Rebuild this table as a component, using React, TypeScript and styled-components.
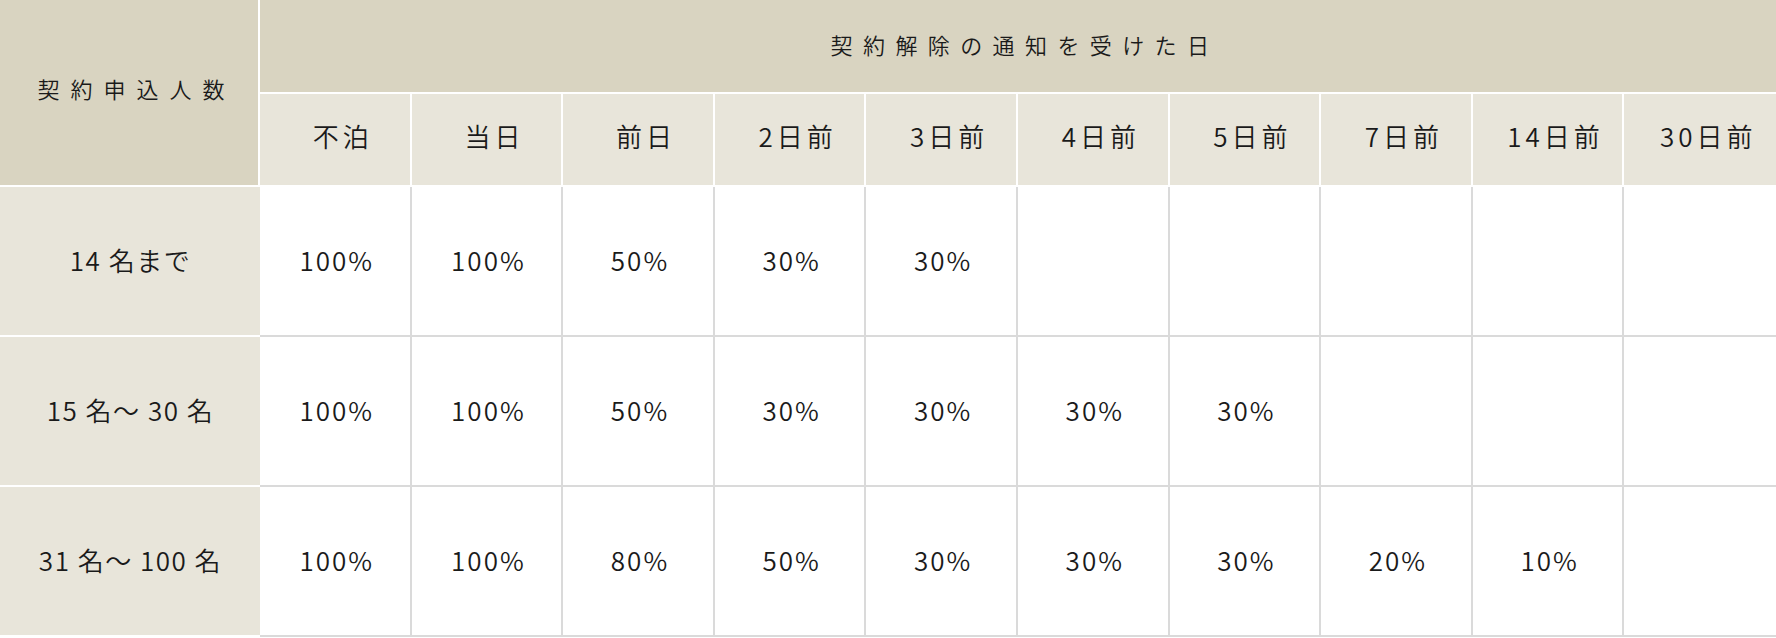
import styled, { createGlobalStyle } from 'styled-components'

const GlobalStyle = createGlobalStyle`
  html, body {
    margin: 0;
    padding: 0;
    background: #ffffff;
  }
  body {
    font-family: "Noto Sans CJK JP", "Noto Sans", sans-serif;
    color: #1a1a1a;
  }
`

type Row = {
  label: string
  values: string[]
}

const days = ['不泊', '当日', '前日', '2日前', '3日前', '4日前', '5日前', '7日前', '14日前', '30日前']

const rows: Row[] = [
  { label: '14 名まで', values: ['100%', '100%', '50%', '30%', '30%', '', '', '', '', ''] },
  { label: '15 名～ 30 名', values: ['100%', '100%', '50%', '30%', '30%', '30%', '30%', '', '', ''] },
  { label: '31 名～ 100 名', values: ['100%', '100%', '80%', '50%', '30%', '30%', '30%', '20%', '10%', ''] },
]

export default function App() {
  return (
    <>
      <GlobalStyle />
      <Table>
        <colgroup>
          <col style={{ width: 260 }} />
          {days.map((d) => (
            <col key={d} />
          ))}
        </colgroup>
        <thead>
          <tr>
            <Corner rowSpan={2}>契約申込人数</Corner>
            <Title colSpan={10}>契約解除の通知を受けた日</Title>
          </tr>
          <tr>
            {days.map((d, i) => (
              <DayHead key={d} $last={i === days.length - 1}>
                {d}
              </DayHead>
            ))}
          </tr>
        </thead>
        <tbody>
          {rows.map((r) => (
            <tr key={r.label}>
              <RowHead>{r.label}</RowHead>
              {r.values.map((v, i) => (
                <Cell key={i} $last={i === r.values.length - 1}>
                  {v}
                </Cell>
              ))}
            </tr>
          ))}
        </tbody>
      </Table>
    </>
  )
}

const Table = styled.table`
  width: 1776px;
  table-layout: fixed;
  border-collapse: separate;
  border-spacing: 0;
`

const Corner = styled.th`
  background-color: #d9d4c1;
  border-right: 2px solid #ffffff;
  border-bottom: 2px solid #ffffff;
  font-size: 22px;
  font-weight: 350;
  letter-spacing: 11px;
  padding: 0 0 9px 15px;
  text-align: center;
`

const Title = styled.th`
  height: 94px;
  box-sizing: border-box;
  background-color: #d9d4c1;
  border-bottom: 2px solid #ffffff;
  font-size: 22px;
  font-weight: 350;
  letter-spacing: 10.4px;
  padding: 0 0 5px 14px;
  text-align: center;
`

const DayHead = styled.th<{ $last?: boolean }>`
  height: 93px;
  box-sizing: border-box;
  background-color: #e8e5da;
  border-right: ${(p) => (p.$last ? 'none' : '2px solid #ffffff')};
  border-bottom: 2px solid #ffffff;
  font-size: 26px;
  font-weight: 350;
  letter-spacing: 4px;
  padding: 0 0 9px 16px;
  text-align: center;
`

const RowHead = styled.th`
  height: 150px;
  box-sizing: border-box;
  background-color: #e8e5da;
  border-bottom: 2px solid #ffffff;
  font-size: 26px;
  font-weight: 350;
  letter-spacing: 1.5px;
  padding: 0 0 4px 1px;
  text-align: center;
  white-space: nowrap;
`

const Cell = styled.td<{ $last?: boolean }>`
  height: 150px;
  box-sizing: border-box;
  background-color: #ffffff;
  border-right: ${(p) => (p.$last ? 'none' : '2px solid #dadada')};
  border-bottom: 2px solid #dadada;
  font-size: 26px;
  font-weight: 350;
  letter-spacing: 2px;
  padding: 0 0 4px 4px;
  text-align: center;
`
